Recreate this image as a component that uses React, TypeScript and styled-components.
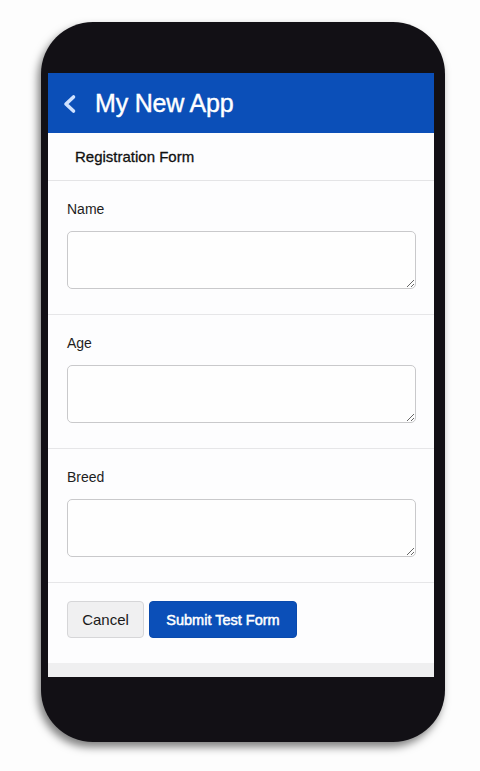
import styled, { createGlobalStyle } from 'styled-components';

const GlobalStyle = createGlobalStyle`
  html, body {
    margin: 0;
    padding: 0;
    background: #fdfdfd;
    font-family: "Liberation Sans", Arial, sans-serif;
  }
`;

const fields = ['Name', 'Age', 'Breed'];

const BackIcon = () => (
  <svg width="16" height="20" viewBox="0 0 16 20" aria-hidden="true">
    <path
      d="M12.5 3 L5 10 L12.5 17"
      fill="none"
      stroke="#cfe2ff"
      strokeWidth="3.6"
      strokeLinecap="round"
      strokeLinejoin="round"
    />
  </svg>
);

const App = () => {
  return (
    <>
      <GlobalStyle />
      <Page>
        <Phone>
          <Screen>
            <Header>
              <BackButton>
                <BackIcon />
              </BackButton>
              <Title>My New App</Title>
            </Header>
            <SubHeader>Registration Form</SubHeader>
            {fields.map(field => (
              <Field key={field}>
                <Label htmlFor={field}>{field}</Label>
                <TextArea id={field} />
              </Field>
            ))}
            <Actions>
              <CancelButton>Cancel</CancelButton>
              <SubmitButton>Submit Test Form</SubmitButton>
            </Actions>
            <BottomBand />
          </Screen>
        </Phone>
      </Page>
    </>
  );
};

const Page = styled.div`
  width: 480px;
  height: 771px;
  box-sizing: border-box;
  padding: 22px 0 0 41px;
  overflow: hidden;
`;

const Phone = styled.div`
  width: 404px;
  height: 720px;
  box-sizing: border-box;
  padding: 51px 11px 0 7px;
  background: #121015;
  border-radius: 52px;
  box-shadow: -3px 5px 9px rgba(0, 0, 0, 0.5);
`;

const Screen = styled.div`
  width: 386px;
  height: 604px;
  background: #fdfdfe;
  display: flex;
  flex-direction: column;
  overflow: hidden;
`;

const Header = styled.div`
  height: 60px;
  flex-shrink: 0;
  background: #0b4fb8;
  display: flex;
  align-items: center;
  padding-left: 13px;
`;

const BackButton = styled.div`
  display: flex;
  align-items: center;
  width: 34px;
  margin-top: 1px;
`;

const Title = styled.h1`
  margin: 0;
  color: #ffffff;
  font-size: 25px;
  font-weight: 400;
  letter-spacing: -0.2px;
  -webkit-text-stroke: 0.4px #ffffff;
`;

const SubHeader = styled.div`
  height: 47px;
  flex-shrink: 0;
  display: flex;
  align-items: center;
  padding-left: 27px;
  font-size: 15px;
  color: #111;
  -webkit-text-stroke: 0.3px #111;
  border-bottom: 1px solid #e4e4e6;
`;

const Field = styled.div`
  display: flex;
  flex-direction: column;
  padding: 18px 18px 25px 19px;
  border-bottom: 1px solid #e6e6e8;
  flex-shrink: 0;
`;

const Label = styled.label`
  font-size: 14px;
  line-height: 20px;
  color: #1d1d1d;
  margin-bottom: 12px;
`;

const TextArea = styled.textarea`
  box-sizing: border-box;
  width: 100%;
  height: 58px;
  border: 1px solid #c9c9cb;
  border-radius: 5px;
  background: #fefefe;
  font-family: inherit;
  font-size: 14px;
  padding: 6px 8px;
  outline: none;
`;

const Actions = styled.div`
  display: flex;
  gap: 5px;
  padding: 18px 19px 25px;
  flex-shrink: 0;
`;

const BaseButton = styled.button`
  height: 37px;
  border-radius: 4px;
  font-family: inherit;
  font-size: 15px;
  padding: 0 10px;
  cursor: pointer;
`;

const CancelButton = styled(BaseButton)`
  width: 77px;
  background: #f0f0f1;
  border: 1px solid #d6d6d8;
  color: #1a1a1a;
`;

const SubmitButton = styled(BaseButton)`
  width: 148px;
  background: #0b4fb8;
  border: 1px solid #0a4aad;
  color: #ffffff;
  font-size: 14.5px;
  -webkit-text-stroke: 0.5px #ffffff;
`;

const BottomBand = styled.div`
  flex: 1;
  background: #efeff0;
`;

export default App;
